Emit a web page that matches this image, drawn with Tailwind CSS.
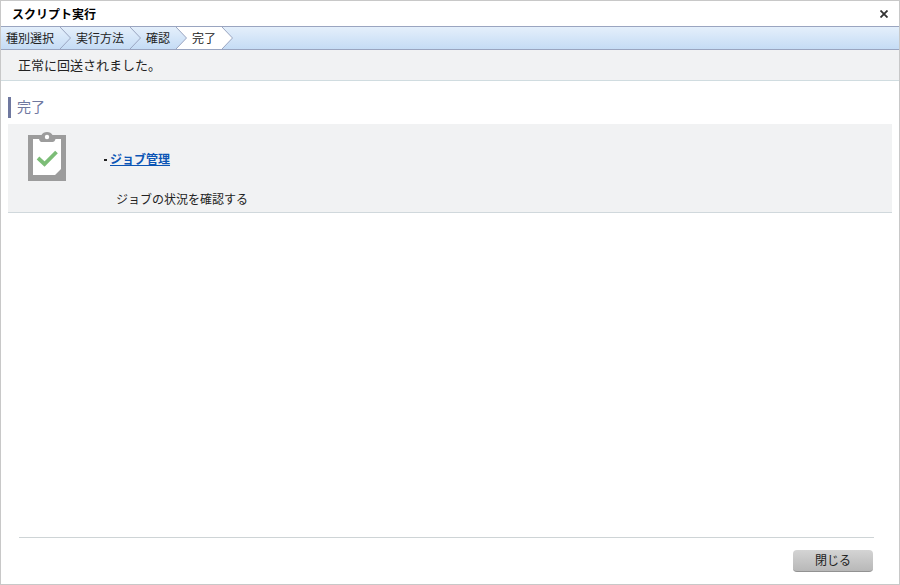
<!DOCTYPE html>
<html lang="ja">
<head>
<meta charset="utf-8">
<meta name="viewport" content="width=device-width, initial-scale=1">
<title>スクリプト実行</title>
<script src="https://cdn.jsdelivr.net/npm/@tailwindcss/browser@4"></script>
</head>
<body class="flex min-h-screen flex-col border border-[#c8c8c8] bg-white font-['Liberation_Sans','Noto_Sans_CJK_JP',sans-serif] text-xs text-[#222]">
  <header class="flex h-[25px] items-center justify-between pr-[9px] pl-[11px]">
    <h1 class="pt-0.5 font-bold text-black">スクリプト実行</h1>
    <button type="button" aria-label="ウィンドウを閉じる" class="flex size-3 items-center justify-center">
      <svg class="size-2" viewBox="0 0 8 8" fill="none" stroke="#333" stroke-width="1.8"><path d="M0.5 0.5 7.5 7.5M7.5 0.5 0.5 7.5"/></svg>
    </button>
  </header>

  <nav aria-label="手順" class="border-y border-[#9aa5c0] bg-linear-to-b from-[#e4effb] to-[#c5dcf5]">
    <ol class="flex h-[22px] items-stretch">
      <li class="flex items-center"><span class="pt-0.5 pr-1.5 pl-[5px]">種別選択</span>
        <svg class="h-full w-[11px]" viewBox="0 0 11 22" fill="none" stroke="#9aa5c0"><path d="M0 0 10.5 11 0 22"/></svg></li>
      <li class="flex items-center"><span class="pt-0.5 pr-1.5 pl-[5px]">実行方法</span>
        <svg class="h-full w-[11px]" viewBox="0 0 11 22" fill="none" stroke="#9aa5c0"><path d="M0 0 10.5 11 0 22"/></svg></li>
      <li class="flex items-center"><span class="pt-0.5 pr-1.5 pl-[5px]">確認</span>
        <svg class="h-full w-[11px]" viewBox="0 0 11 22" fill="none"><path fill="#fff" d="M0 0H11V22H0L10.5 11Z"/><path stroke="#9aa5c0" d="M0 0 10.5 11 0 22"/></svg></li>
      <li class="flex items-center" aria-current="step"><span class="flex h-full items-center bg-white pt-0.5 pr-1.5 pl-[5px]">完了</span>
        <svg class="h-full w-[11px]" viewBox="0 0 11 22" fill="#fff" stroke="#9aa5c0"><path d="M0 0 10.5 11 0 22"/></svg></li>
    </ol>
  </nav>

  <p role="status" class="flex h-[31px] items-center border-b border-[#d0dce0] bg-[#f1f2f3] px-[17px] pt-0.5 text-[13px]">正常に回送されました。</p>

  <main class="flex-1 px-[7px] pt-4">
    <h2 class="border-l-3 border-[#6f789f] pl-1.5 text-sm leading-[21px] text-[#6f789f]">完了</h2>
    <section class="mt-1.5 flex items-start border-b border-[#d0d8dc] bg-[#f1f2f3] pt-2 pb-0.5 pl-5">
      <svg class="h-[50px] w-[38px] shrink-0" viewBox="0 0 38 50">
        <path fill="#9c9c9c" d="M0 3H13.5C14.5 1 16.5 0 19 0S23.500 1 24.500 3H38V49H0Z"/>
        <path fill="#fff" d="M5 7H11C11.500 9.500 13 10 14 10H24.500C26 10 27 9 27.500 7H33V37L27 43H5Z"/>
        <circle cx="19" cy="5" r="2.2" fill="#fff"/>
        <path fill="none" stroke="#7cbd77" stroke-width="3.8" d="M10 26 16.500 32 28.500 20"/>
      </svg>
      <div class="pt-[18px] pl-[38px]">
        <div class="flex items-center leading-5">
          <span aria-hidden="true" class="mr-[3px] h-0.5 w-[3px] bg-[#222]"></span>
          <a href="#" class="font-bold text-[#0b55b5] underline">ジョブ管理</a>
        </div>
        <p class="mt-5 pl-3 leading-5">ジョブの状況を確認する</p>
      </div>
    </section>
  </main>

  <footer class="mr-[25px] ml-[18px] flex justify-end border-t border-[#ced4d6] py-3 pr-px">
    <button type="button" class="h-[22px] w-20 rounded border-b border-[#929292] bg-linear-to-b from-[#d4d4d4] to-[#b8b8b8] leading-5">閉じる</button>
  </footer>
</body>
</html>
